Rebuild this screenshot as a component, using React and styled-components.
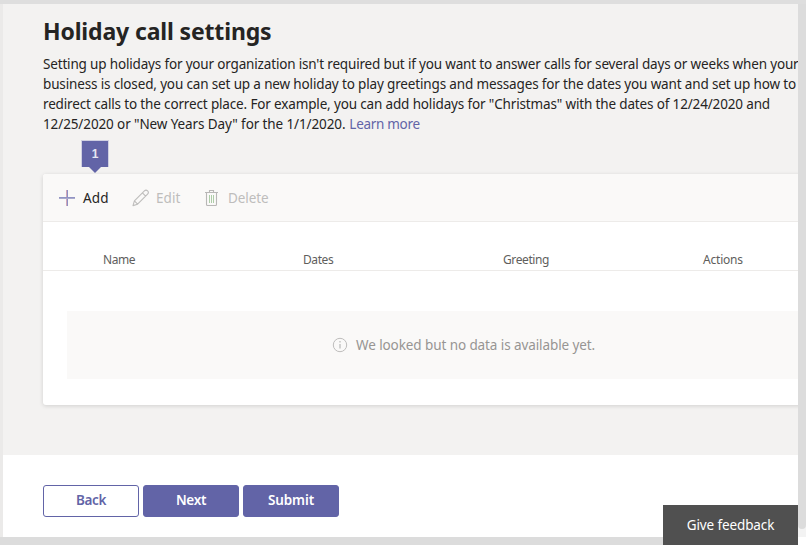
import React from 'react';
import styled, { createGlobalStyle } from 'styled-components';

const GlobalStyle = createGlobalStyle`
  * { box-sizing: border-box; }
  html, body { margin: 0; overflow: hidden; }
  body {
    font-family: "Noto Sans", "Open Sans", sans-serif;
    font-size: 13.5px;
    color: #252423;
    background: #fff;
  }
`;

const Frame = styled.div`
  position: relative;
  display: grid;
  grid-template-columns: 3px 795px 8px;
  grid-template-rows: 4px 533px 8px;
  width: 806px;
  height: 545px;
  overflow: hidden;
`;

const TopEdge = styled.div`
  grid-column: 1 / -1;
  background: #dedede;
`;

const LeftEdge = styled.div`
  background: #ebeae9;
`;

const BottomEdge = styled.div`
  grid-column: 1 / 3;
  background: #dcdcdc;
`;

const ScrollTrack = styled.div`
  background: #f3f3f3;
`;

const ScrollThumb = styled.div`
  height: 525px;
  background: #dcdcdc;
  border-radius: 0 0 4px 4px;
`;

const Page = styled.main`
  display: flex;
  flex-direction: column;
  min-width: 0;
  overflow: hidden;
  background: #f3f2f1;
`;

const Content = styled.section`
  height: 451px;
  padding: 11px 0 0 40px;
`;

const Title = styled.h1`
  margin: 0;
  height: 39px;
  font-size: 23px;
  line-height: 32px;
  font-weight: 700;
  letter-spacing: -0.15px;
`;

const Description = styled.p`
  margin: 0;
  height: 120px;
`;

const Line = styled.span`
  display: block;
  height: 20px;
  line-height: 20px;
  white-space: nowrap;
  letter-spacing: ${({ $tracking }) => $tracking}px;
`;

const Link = styled.a`
  color: #6264a7;
  letter-spacing: -0.3px;
  margin-left: 0.5px;
`;

const Card = styled.div`
  position: relative;
  width: 780px;
  height: 231px;
  background: #fff;
  border-radius: 3px;
  box-shadow: 0 1px 4px rgba(0, 0, 0, 0.14);
`;

const Callout = styled.div`
  position: absolute;
  left: 38px;
  top: -34px;
  width: 28px;
  height: 27px;
  border: 1px solid #d0d0e2;
  border-bottom: 0;
  background: #6264a7;
  color: #e6e6f2;
  font: 700 12px/26px "Liberation Sans", sans-serif;
  text-align: center;

  &::after {
    content: "";
    position: absolute;
    left: 7px;
    top: 26px;
    border: 6px solid transparent;
    border-bottom: 0;
    border-top-color: #6264a7;
  }
`;

const Toolbar = styled.div`
  display: flex;
  align-items: center;
  height: 48px;
  padding-left: 15px;
  background: #faf9f8;
  border-bottom: 1px solid #edebe9;
  border-radius: 3px 3px 0 0;
`;

const Command = styled.button`
  display: flex;
  align-items: center;
  gap: ${({ $gap }) => $gap || 7}px;
  width: ${({ $width }) => $width}px;
  padding: 0;
  border: 0;
  background: none;
  font: 13.5px/20px "Noto Sans", sans-serif;
  letter-spacing: ${({ $tracking }) => $tracking || 0}px;
  color: ${({ $disabled }) => ($disabled ? '#bebdbc' : '#252423')};

  svg { flex: none; }
`;

const HeaderRow = styled.div`
  display: grid;
  grid-template-columns: repeat(3, 200px) 1fr;
  height: 49px;
  padding: 28px 0 0 60px;
  border-bottom: 1px solid #edebe9;
  font-size: 12px;
  line-height: 20px;
  color: #605e5c;
`;

const ColumnName = styled.span`
  letter-spacing: ${({ $tracking }) => $tracking || -0.4}px;
`;

const Empty = styled.div`
  display: flex;
  align-items: center;
  gap: 8px;
  height: 68px;
  margin: 40px 0 0 24px;
  padding-left: 265px;
  background: #faf9f8;
  color: #979593;
  font-size: 13.5px;
  letter-spacing: -0.09px;
`;

const Footer = styled.footer`
  flex: 1;
  display: flex;
  align-items: flex-start;
  gap: 4px;
  padding: 30px 0 0 40px;
  background: #fff;
`;

const Button = styled.button`
  width: 96px;
  height: 32px;
  padding: 0 0 2px;
  border: 1px solid #6264a7;
  border-radius: 3px;
  background: ${({ $primary }) => ($primary ? '#6264a7' : '#fff')};
  color: ${({ $primary }) => ($primary ? '#fff' : '#6264a7')};
  font: 600 13.5px/20px "Noto Sans", sans-serif;
  letter-spacing: ${({ $tracking }) => $tracking}px;
`;

const Feedback = styled.button`
  position: absolute;
  left: 663px;
  top: 505px;
  width: 135px;
  height: 40px;
  padding: 0;
  border: 0;
  background: #505050;
  color: #fff;
  font: 13.5px/20px "Noto Sans", sans-serif;
  letter-spacing: -0.12px;
`;

const AddIcon = () => (
  <svg width="18" height="18" viewBox="0 0 18 18" fill="none">
    <path d="M8.5 1v16" stroke="#d3a9b8" />
    <path d="M9.5 1v16" stroke="#8d8fc4" />
    <path d="M1 8.5h16" stroke="#9294c4" />
    <path d="M1 9.5h16" stroke="#a9aacd" />
  </svg>
);

const EditIcon = () => (
  <svg width="18" height="18" viewBox="0 0 18 18" fill="none" stroke="#bebdbc" strokeWidth="1.1" strokeLinejoin="round">
    <path d="M1 16.6 2.4 11.9 12.4 1.9a2.2 2.2 0 0 1 3.2 3.2L5.6 15.2zM2.4 11.9l3.2 3.3M10.4 3.9l3.2 3.2" />
  </svg>
);

const DeleteIcon = () => (
  <svg width="18" height="18" viewBox="0 0 18 18" fill="none">
    <path d="M2 3.5h13M6.5 3.5v-2h4v2M3.5 3.5v12a1 1 0 0 0 1 1h8a1 1 0 0 0 1-1v-12" stroke="#b8b7b6" strokeWidth="1.1" />
    <path d="M6.5 6v8M8.5 6v8M10.5 6v8" stroke="#aecda8" />
  </svg>
);

const InfoIcon = () => (
  <svg width="16" height="16" viewBox="0 0 16 16" fill="none" stroke="#bebdbc">
    <circle cx="8" cy="8" r="6.7" />
    <path d="M8 7v4.5M8 4v1.6" strokeWidth="1.3" />
  </svg>
);

const lines = [
  { text: "Setting up holidays for your organization isn't required but if you want to answer calls for several days or weeks when your", tracking: -0.168 },
  { text: 'business is closed, you can set up a new holiday to play greetings and messages for the dates you want and set up how to', tracking: -0.148 },
  { text: 'redirect calls to the correct place. For example, you can add holidays for "Christmas" with the dates of 12/24/2020 and', tracking: -0.15 },
];

export default function App() {
  return (
    <>
      <GlobalStyle />
      <Frame>
        <TopEdge />
        <LeftEdge />
        <Page>
          <Content>
            <Title>Holiday call settings</Title>
            <Description>
              {lines.map(({ text, tracking }) => (
                <Line key={text} $tracking={tracking}>{text}</Line>
              ))}
              <Line $tracking={-0.11}>
                12/25/2020 or "New Years Day" for the 1/1/2020. <Link>Learn more</Link>
              </Line>
            </Description>
            <Card>
              <Callout>1</Callout>
              <Toolbar>
                <Command $width={74} $tracking={0.2}><AddIcon />Add</Command>
                <Command $width={71} $gap={6} $disabled $tracking={0.1}><EditIcon />Edit</Command>
                <Command $width={80} $disabled $tracking={-0.1}><DeleteIcon />Delete</Command>
              </Toolbar>
              <HeaderRow>
                <ColumnName>Name</ColumnName>
                <ColumnName>Dates</ColumnName>
                <ColumnName>Greeting</ColumnName>
                <ColumnName $tracking={-0.2}>Actions</ColumnName>
              </HeaderRow>
              <Empty><InfoIcon />We looked but no data is available yet.</Empty>
            </Card>
          </Content>
          <Footer>
            <Button $tracking={-0.4}>Back</Button>
            <Button $tracking={-0.3} $primary>Next</Button>
            <Button $tracking={-0.1} $primary>Submit</Button>
          </Footer>
        </Page>
        <ScrollTrack><ScrollThumb /></ScrollTrack>
        <BottomEdge />
        <Feedback>Give feedback</Feedback>
      </Frame>
    </>
  );
}
